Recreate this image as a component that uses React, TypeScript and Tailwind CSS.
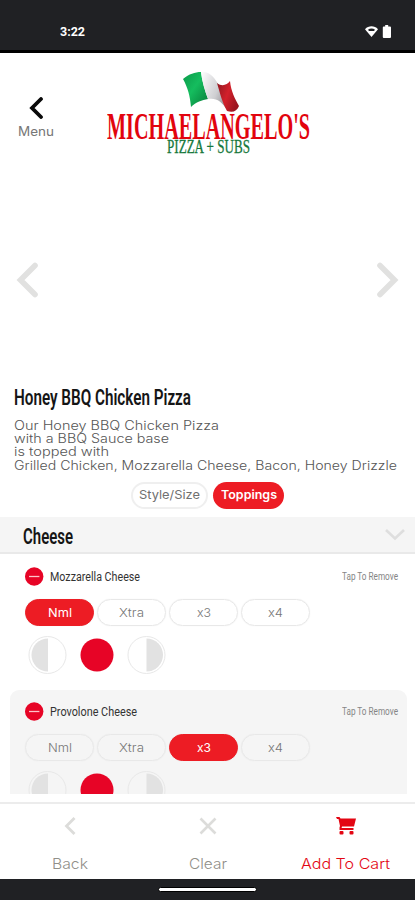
import React, { useLayoutEffect, useRef, useState } from "react";

const GOTHAM = "font-[Inter,'Liberation_Sans',sans-serif]";
const DIN = "font-[Roboto,'Liberation_Sans',sans-serif]";

/* Text stretched or condensed horizontally to fill the width of its box. */
function Fit({ className, children }: { className: string; children: string }) {
  const box = useRef<HTMLSpanElement>(null);
  const text = useRef<HTMLSpanElement>(null);
  const [scale, setScale] = useState(1);
  useLayoutEffect(() => {
    if (box.current && text.current) {
      setScale(box.current.offsetWidth / text.current.getBoundingClientRect().width);
    }
  }, []);
  return (
    <span ref={box} className={`block shrink-0 whitespace-nowrap ${className}`}>
      <span ref={text} className="inline-block origin-left" style={{ transform: `scaleX(${scale})` }}>
        {children}
      </span>
    </span>
  );
}

function StatusBar() {
  return (
    <div className="flex h-[53px] shrink-0 items-start justify-between border-b-[3px] border-black bg-[#202124] pl-[60px] pr-[23px] pt-[22px]">
      <Fit className={`${DIN} w-[25px] text-[13px] font-bold leading-[19px] text-white`}>3:22</Fit>
      <div className="flex items-center gap-[3px] pt-[3px]">
        <svg width="15" height="13" viewBox="0 0 15 13">
          <path d="M1 4.2C4.5.4 10.5.4 14 4.2L7.5 12Z" fill="#fff" />
          <path d="M4 4.800C6 3.200 9 3.200 11 4.800L10 6H5Z" fill="#202124" />
        </svg>
        <svg width="10" height="13" viewBox="0 0 10 13">
          <path d="M3.200 0h3v1.500H8a1 1 0 0 1 1 1V12a1 1 0 0 1-1 1H1.800a1 1 0 0 1-1-1V2.500a1 1 0 0 1 1-1h1.400Z" fill="#fff" />
        </svg>
      </div>
    </div>
  );
}

function Flag() {
  return (
    <svg width="58" height="43" viewBox="0 0 58 43" className="ml-[76px]">
      <defs>
        <linearGradient id="green" x1="0" y1="0" x2="1" y2="1">
          <stop offset="0" stopColor="#0b9a4a" />
          <stop offset=".45" stopColor="#15bd5e" />
          <stop offset="1" stopColor="#067a38" />
        </linearGradient>
        <linearGradient id="white" x1="0" y1="0" x2="1" y2=".6">
          <stop offset="0" stopColor="#fff" />
          <stop offset=".35" stopColor="#e4e4e6" />
          <stop offset=".65" stopColor="#cfcfd2" />
          <stop offset="1" stopColor="#99979b" />
        </linearGradient>
        <linearGradient id="red" x1="0" y1="0" x2="1" y2=".5">
          <stop offset="0" stopColor="#8d1820" />
          <stop offset=".55" stopColor="#d3202b" />
          <stop offset="1" stopColor="#9d1520" />
        </linearGradient>
      </defs>
      <path d="M0 8C6 3 12 1 18 1C19 10 22 20 25 28C19 29 13 31 8 36C7 25 5 17 0 8Z" fill="url(#green)" />
      <path d="M18 1C28 0 32 8 36 14C37 23 41 33 45 40C38 30 34 27 25 28C22 20 19 10 18 1Z" fill="url(#white)" />
      <path d="M34 12C39 16 44 14 47 10C48 20 52 28 56 35C54 40 50 42 44 40C39 31 37 22 34 12Z" fill="url(#red)" />
    </svg>
  );
}

function Header() {
  return (
    <header className="flex h-[127px] shrink-0 pt-[18px]">
      <button className="ml-[18px] flex w-9 flex-col items-center pt-[26px]">
        <svg width="18" height="22" viewBox="0 0 18 22">
          <path d="M14 2L5 11L14 20" fill="none" stroke="#0a0a0a" strokeWidth="3.800" strokeLinecap="round" strokeLinejoin="miter" />
        </svg>
        <Fit className={`${GOTHAM} mt-[4px] w-9 text-left text-[12.5px] leading-[18px] text-[#777]`}>Menu</Fit>
      </button>
      <div className="ml-[53px] w-[203px]">
        <Flag />
        <Fit className="-mt-[1px] h-[26px] w-[203px] font-['Liberation_Serif',serif] text-[38px] font-bold leading-[26px] text-[#e2040e]">
          MICHAELANGELO'S
        </Fit>
        <Fit className="ml-[60px] h-[16px] w-[83px] font-['Liberation_Serif',serif] text-[19.5px] leading-[16px] text-[#16783b] [-webkit-text-stroke:0.3px_#16783b]">
          PIZZA + SUBS
        </Fit>
      </div>
    </header>
  );
}

function Carousel() {
  return (
    <div className="flex h-[200px] shrink-0 items-center justify-between px-[14px]">
      <svg width="25" height="36" viewBox="0 0 25 36">
        <path d="M21 3.500L6.500 18L21 32.500" fill="none" stroke="#e1e1e0" strokeWidth="5.600" strokeLinecap="round" />
      </svg>
      <svg width="25" height="36" viewBox="0 0 25 36">
        <path d="M4 3.500L18.500 18L4 32.500" fill="none" stroke="#e1e1e0" strokeWidth="5.600" strokeLinecap="round" />
      </svg>
    </div>
  );
}

function Description() {
  return (
    <section className="h-[137px] shrink-0 pl-[14px] pt-[5px]">
      <Fit className={`${DIN} w-[177px] text-[22px] font-semibold leading-[26px] text-[#151515]`}>Honey BBQ Chicken Pizza</Fit>
      <div className={`${GOTHAM} mt-[7.6px] text-[12.5px] font-light leading-[13.4px] text-[#555]`}>
        <Fit className="w-[205px]">Our Honey BBQ Chicken Pizza</Fit>
        <Fit className="w-[155px]">with a BBQ Sauce base</Fit>
        <Fit className="w-[95px]">is topped with</Fit>
        <Fit className="w-[383px]">Grilled Chicken, Mozzarella Cheese, Bacon, Honey Drizzle</Fit>
      </div>
      <div className={`${GOTHAM} ml-[117px] mt-[9.4px] flex gap-[5px]`}>
        <button className="flex h-[27px] w-[77px] items-center justify-center rounded-full border-2 border-[#efefef]">
          <Fit className="w-[61px] text-left text-[12px] text-[#707070]">Style/Size</Fit>
        </button>
        <button className="flex h-[27px] w-[71px] items-center justify-center rounded-full bg-[#ed1c24]">
          <Fit className="w-[56px] text-left text-[12px] font-semibold text-white">Toppings</Fit>
        </button>
      </div>
    </section>
  );
}

const AMOUNTS = [
  { label: "Nml", width: "w-[24px]" },
  { label: "Xtra", width: "w-[25px]" },
  { label: "x3", width: "w-[14px]" },
  { label: "x4", width: "w-[15px]" },
];

function Topping({ name, width, amount, tinted }: { name: string; width: string; amount: string; tinted?: boolean }) {
  return (
    <div className={`mx-[10px] h-[135px] w-[397px] shrink-0 rounded-t-[9px] pl-[15px] ${tinted ? "bg-[#f5f5f5]" : ""}`}>
      <div className="flex h-[43px] items-center pr-[9px]">
        <svg width="19" height="19" viewBox="0 0 19 19">
          <circle cx="9.200" cy="9.500" r="9.200" fill="#e70426" />
          <path d="M4 9.500H14.400" stroke="#ffc4c9" strokeWidth="1.300" />
        </svg>
        <Fit className={`${DIN} ml-[6px] text-[12px] leading-[16px] text-[#333] ${width}`}>{name}</Fit>
        <Fit className={`${DIN} ml-auto w-[56px] text-[10.5px] leading-[16px] text-[#858585]`}>Tap To Remove</Fit>
      </div>
      <div className={`${GOTHAM} mt-px flex gap-[3px]`}>
        {AMOUNTS.map((a) => (
          <button
            key={a.label}
            className={`flex h-[27px] w-[69px] items-center justify-center rounded-full border-[1.5px] shadow-[0_0_1px_#e4e4e4] ${
              a.label === amount ? "border-[#ed1c24] bg-[#ed1c24] text-white" : "border-[#e8e8e8] font-light text-[#777]"
            }`}
          >
            <Fit className={`text-left text-[12px] ${a.width}`}>{a.label}</Fit>
          </button>
        ))}
      </div>
      <svg width="144" height="40" viewBox="0 0 144 40" className="mt-[9px]">
        <circle cx="22.500" cy="20" r="18.500" fill={tinted ? "none" : "#fff"} stroke="#e8e8e8" />
        <path d="M23 3.500A16.500 16.500 0 0 0 23 36.500Z" fill="#e2e2e2" />
        <circle cx="72" cy="20" r="16.500" fill="#e70426" />
        <circle cx="121.500" cy="20" r="18.500" fill={tinted ? "none" : "#fff"} stroke="#e8e8e8" />
        <path d="M121.500 3.500A16.500 16.500 0 0 1 121.500 36.500Z" fill="#e2e2e2" />
      </svg>
    </div>
  );
}

function Footer() {
  return (
    <footer className={`${GOTHAM} mt-[8px] flex h-[77px] shrink-0 justify-center border-t-2 border-[#ececec] text-[14.5px] font-light leading-[20px]`}>
      <button className="flex w-[138px] flex-col items-center justify-between pb-[5px] pt-[12px] text-[#918f89]">
        <svg width="20" height="20" viewBox="0 0 20 20">
          <path d="M14.500 2L6.500 10L14.500 18" fill="none" stroke="#dcdcda" strokeWidth="2.800" />
        </svg>
        <Fit className="w-[36px] text-left">Back</Fit>
      </button>
      <button className="flex w-[138px] flex-col items-center justify-between pb-[5px] pt-[12px] text-[#918f89]">
        <svg width="20" height="20" viewBox="0 0 20 20">
          <path d="M2.500 2.500L17.500 17.500M17.500 2.500L2.500 17.500" fill="none" stroke="#dcdcda" strokeWidth="2.600" />
        </svg>
        <Fit className="w-[38px] text-left">Clear</Fit>
      </button>
      <button className="flex w-[138px] flex-col items-center justify-between pb-[5px] pt-[12px] text-[#e30613]">
        <svg width="20" height="20" viewBox="0 0 20 20" fill="#e30613">
          <path d="M0 1H3.500L4.500 2.500H20L18 10.500H6L5.600 12H17.500V14H3.500V11.500L4 10L2.500 3H1Z" />
          <rect x="3.500" y="15" width="4" height="3.500" rx="1" />
          <rect x="13.500" y="15" width="4" height="3.500" rx="1" />
        </svg>
        <Fit className="w-[89px] text-left">Add To Cart</Fit>
      </button>
    </footer>
  );
}

export default function App() {
  return (
    <div className="flex h-[900px] w-[415px] flex-col overflow-hidden bg-white">
      <StatusBar />
      <Header />
      <Carousel />
      <Description />
      <div className="flex h-[37px] shrink-0 items-center justify-between border-b-2 border-[#e9e9e9] bg-[#f5f5f5] pl-[22.5px] pr-[9px]">
        <Fit className={`${DIN} mt-[2px] w-[50px] text-[22.5px] font-semibold leading-[30px] text-[#151515]`}>Cheese</Fit>
        <svg width="22" height="14" viewBox="0 0 22 14">
          <path d="M2 2L11 10.500L20 2" fill="none" stroke="#dedede" strokeWidth="2.600" />
        </svg>
      </div>
      <div className="flex h-[240px] shrink-0 flex-col overflow-hidden pt-px">
        <Topping name="Mozzarella Cheese" width="w-[90px]" amount="Nml" />
        <Topping name="Provolone Cheese" width="w-[87px]" amount="x3" tinted />
      </div>
      <Footer />
      <div className="flex h-[21px] shrink-0 justify-center bg-[#202124] pt-[8px]">
        <div className="h-[5px] w-[99px] rounded-full border border-black bg-white" />
      </div>
    </div>
  );
}
